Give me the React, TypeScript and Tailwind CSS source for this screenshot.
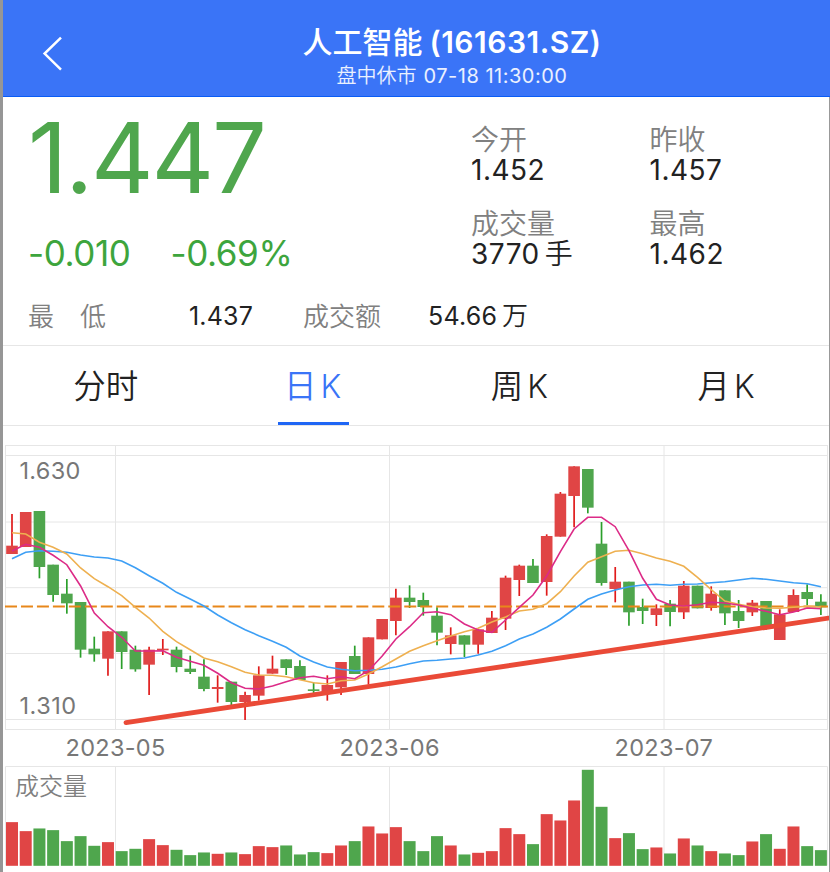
import { clsx } from "clsx";

type Candle = {
  up: boolean;
  high: number;
  top: number;
  bottom: number;
  low: number;
  vol: number;
};

// [direction, high, body top, body bottom, low, volume], in thirds of a pixel
const raw: [string, number, number, number, number, number][] = [
  ["r", 222, 317, 342, 342, 131],
  ["r", 216, 216, 321, 321, 104],
  ["g", 213, 213, 381, 415, 112],
  ["g", 374, 374, 465, 485, 107],
  ["g", 417, 461, 490, 521, 74],
  ["g", 486, 486, 629, 653, 89],
  ["g", 590, 626, 643, 665, 60],
  ["r", 574, 574, 656, 707, 71],
  ["g", 574, 574, 636, 687, 44],
  ["g", 617, 629, 688, 695, 51],
  ["r", 620, 629, 674, 765, 80],
  ["r", 597, 626, 631, 645, 62],
  ["g", 620, 629, 681, 697, 48],
  ["g", 647, 686, 696, 702, 32],
  ["g", 658, 710, 747, 754, 40],
  ["r", 706, 741, 747, 788, 36],
  ["g", 725, 725, 786, 796, 40],
  ["r", 755, 765, 786, 840, 35],
  ["r", 679, 706, 767, 782, 59],
  ["r", 647, 686, 701, 701, 56],
  ["g", 658, 658, 684, 705, 61],
  ["g", 661, 678, 720, 720, 34],
  ["g", 727, 748, 753, 760, 41],
  ["r", 706, 735, 762, 782, 38],
  ["r", 666, 666, 742, 765, 61],
  ["g", 617, 648, 702, 702, 74],
  ["r", 592, 592, 702, 734, 118],
  ["r", 537, 537, 598, 598, 97],
  ["r", 446, 473, 543, 586, 116],
  ["g", 436, 473, 486, 504, 74],
  ["g", 458, 480, 501, 527, 44],
  ["g", 502, 527, 578, 616, 89],
  ["r", 562, 586, 612, 643, 61],
  ["g", 586, 586, 614, 651, 34],
  ["r", 568, 568, 614, 641, 39],
  ["r", 513, 533, 579, 579, 44],
  ["r", 407, 413, 536, 570, 113],
  ["r", 374, 377, 420, 468, 95],
  ["g", 357, 377, 429, 429, 65],
  ["r", 283, 288, 426, 467, 155],
  ["r", 156, 161, 290, 290, 136],
  ["r", 79, 79, 168, 262, 196],
  ["g", 87, 87, 203, 220, 288],
  ["g", 246, 311, 429, 437, 177],
  ["r", 381, 425, 447, 487, 83],
  ["g", 425, 425, 517, 557, 98],
  ["g", 476, 501, 513, 552, 50],
  ["r", 493, 505, 525, 558, 55],
  ["g", 480, 491, 516, 559, 37],
  ["r", 423, 437, 517, 537, 82],
  ["g", 437, 437, 505, 505, 61],
  ["r", 439, 461, 504, 512, 44],
  ["g", 451, 451, 520, 555, 37],
  ["g", 480, 513, 543, 564, 32],
  ["r", 480, 488, 517, 528, 73],
  ["g", 483, 483, 560, 569, 95],
  ["r", 508, 523, 600, 600, 51],
  ["r", 448, 465, 516, 516, 118],
  ["g", 433, 456, 477, 496, 59],
  ["g", 463, 485, 502, 525, 47],
];

const ma5 = [
  333, 313, 322, 346, 374, 438, 519, 560, 592, 633, 633, 632, 652, 664, 676, 700, 728, 745, 747, 738,
  725, 713, 709, 716, 710, 716, 692, 648, 597, 560, 518, 515, 524, 552, 570, 577, 540, 502, 465, 408,
  335, 267, 232, 232, 260, 332, 415, 478, 495, 498, 494, 487, 489, 495, 505, 514, 524, 516, 504, 506,
];
const ma10 = [
  278, 282, 307, 322, 342, 384, 416, 440, 467, 502, 534, 574, 605, 629, 654, 665, 680, 697, 705, 706,
  710, 719, 728, 732, 722, 720, 702, 680, 657, 634, 617, 602, 588, 575, 565, 546, 531, 513, 508, 491,
  455, 408, 367, 350, 334, 331, 341, 354, 364, 379, 412, 449, 483, 493, 500, 504, 505, 502, 499, 501,
];
const ma20 = [
  356, 337, 332, 334, 337, 345, 351, 354, 363, 383, 407, 430, 457, 477, 498, 525, 548, 569, 587, 604,
  622, 648, 666, 681, 688, 692, 691, 688, 681, 671, 663, 661, 657, 654, 645, 634, 617, 597, 582, 562,
  537, 507, 478, 462, 450, 440, 435, 433, 436, 433, 432, 428, 425, 420, 415, 418, 423, 428, 431, 440,
];

const RED = "#e04545";
const GREEN = "#4fa64d";
const RED_WICK = "#e01b1b";
const GREEN_WICK = "#2b9f2b";
const GRID = "#e6e6e6";

const cx = (i: number) => 9 + i * 13.71;
const py = (v: number) => v / 3 - 5;

const candles: Candle[] = raw.map(([dir, high, top, bottom, low, vol]) => ({
  up: dir === "r",
  high: py(high),
  top: py(top),
  bottom: py(bottom),
  low: py(low),
  vol: vol / 3,
}));

const toPoints = (values: number[]) => values.map((v, i) => `${cx(i).toFixed(1)},${py(v).toFixed(1)}`).join(" ");

function Header() {
  return (
    <header className="relative h-[97px] border-b border-[#0a5cf5] bg-[#3a74f7] pt-[23px] text-center text-white">
      <svg className="absolute left-[38px] top-[36px]" width="24" height="36" viewBox="0 0 24 36" fill="none">
        <path d="M20 1.7 3.6 17.6 20 33.6" stroke="white" strokeWidth="2.5" />
      </svg>
      <div className="ml-[71px]">
        <h1 className="whitespace-pre text-[30px] font-semibold leading-[38px]">
          <span className="font-medium">人工智能</span>
          <span className="ml-[7px] tracking-[0.5px]">(161631.SZ)</span>
        </h1>
        <p className="pt-px text-[20px] leading-[28px] text-white/90">
          <span className="font-[350]">盘中休市</span>
          <span className="ml-[7px] tracking-[0.5px]">07-18 11:30:00</span>
        </p>
      </div>
    </header>
  );
}

const stats = [
  { label: "今开", value: "1.452" },
  { label: "昨收", value: "1.457" },
  { label: "成交量", value: "3770", unit: "手" },
  { label: "最高", value: "1.462" },
];

function Quote() {
  return (
    <section className="h-[249px] border-b border-[#e6e6e6]">
      <div className="flex h-[186px]">
        <div className="w-[468px] pl-[25px] text-[#4fa64d]">
          <div className="mt-[13px] h-[95px] text-[97px] leading-[96px] tracking-[-2.2px]">1.447</div>
          <div className="mt-[26px] flex gap-[40px] text-[35px] leading-[44px] tracking-[-0.4px] text-[#3da53d]">
            <span>-0.010</span>
            <span>-0.69%</span>
          </div>
        </div>
        <div className="grid grid-cols-[178.5px_1fr] content-start gap-y-[24px] pt-[28px]">
          {stats.map((s) => (
            <div key={s.label}>
              <div className="h-[30px] text-[28px] font-[350] leading-[30px] text-[#808080]">{s.label}</div>
              <div className="flex h-[30px] items-center text-[28px] leading-[30px] tracking-[0.5px] text-[#222]">
                {s.value}
                {s.unit && <span className="ml-[5px] font-[350]">{s.unit}</span>}
              </div>
            </div>
          ))}
        </div>
      </div>
      <div className="flex h-[66px] items-center pl-[25px] text-[26px] leading-[30px] text-[#222]">
        <div className="flex w-[161px] gap-[26px] pt-px font-[350] text-[#808080]">
          <span>最</span>
          <span>低</span>
        </div>
        <div className="w-[114px] text-[25px] tracking-[0.2px]">1.437</div>
        <div className="w-[125px] pt-px font-[350] text-[#808080]">成交额</div>
        <div className="text-[25px] tracking-[0.2px]">
          54.66<span className="ml-[5px] text-[26px] font-[350]">万</span>
        </div>
      </div>
    </section>
  );
}

const tabs = [
  { cn: "分时", k: "" },
  { cn: "日", k: "K", active: true },
  { cn: "周", k: "K" },
  { cn: "月", k: "K" },
];

function Tabs() {
  return (
    <nav className="grid h-[80px] grid-cols-4 border-b border-[#e6e6e6]">
      {tabs.map((t) => (
        <button
          key={t.cn}
          className={clsx(
            "flex flex-col items-center text-[32.5px] font-[350]",
            t.active ? "text-[#3a74f7]" : "text-[#222]"
          )}
        >
          <span className="flex h-[76px] items-center gap-[4px] pr-px pt-[6px]">
            {t.cn}
            {t.k && <span className="text-[32px]">{t.k}</span>}
          </span>
          {t.active && <span className="h-[3px] w-[71px] bg-[#1f66f5]" />}
        </button>
      ))}
    </nav>
  );
}

function PriceChart() {
  return (
    <svg className="mt-[19px] block" width="827" height="286" viewBox="0 0 827 286" fill="none">
      <g stroke={GRID}>
        <rect x="2.5" y="0.5" width="822" height="284" />
        {[10.5, 77, 142.7, 208.5, 274.5].map((y) => (
          <path key={y} d={`M2.5 ${y}H824.5`} />
        ))}
        {[112.5, 386.5, 661].map((x) => (
          <path key={x} d={`M${x} 0.5V284.5`} />
        ))}
      </g>
      <text x="16.5" y="34" fontSize="23.5" letterSpacing="0.3" fill="#777">
        1.630
      </text>
      <text x="16.5" y="269" fontSize="23.5" letterSpacing="0.5" fill="#777">
        1.310
      </text>
      {candles.map((c, i) => (
        <g key={i}>
          <path d={`M${cx(i)} ${c.high}V${c.low}`} stroke={c.up ? RED_WICK : GREEN_WICK} strokeWidth="1.7" />
          <rect
            x={cx(i) - 5.8}
            y={c.top}
            width="11.6"
            height={c.bottom - c.top}
            fill={c.up ? RED : GREEN}
          />
        </g>
      ))}
      <path d="M2 161.5H825" stroke="#e8871a" strokeWidth="2" strokeDasharray="12 3.97" />
      <polyline points={toPoints(ma20)} stroke="#3d9ff5" strokeWidth="1.6" />
      <polyline points={toPoints(ma10)} stroke="#eeb050" strokeWidth="1.6" />
      <polyline points={toPoints(ma5)} stroke="#dc2b87" strokeWidth="1.6" />
      <path d="M123 277.6 828 172.7" stroke="#ea4a37" strokeWidth="4.8" strokeLinecap="round" />
    </svg>
  );
}

function VolumeChart() {
  return (
    <svg className="block" width="827" height="106" viewBox="0 0 827 106" fill="none">
      <g stroke={GRID}>
        <path d="M2.5 99.5V0.5H824.5V99.5" />
        {[112.5, 386.5, 661].map((x) => (
          <path key={x} d={`M${x} 0.5V99.5`} />
        ))}
      </g>
      <text x="12" y="28.5" fontSize="24" fontWeight="350" fill="#808080">
        成交量
      </text>
      {candles.map((c, i) => (
        <rect key={i} x={cx(i) - 6} y={99.8 - c.vol} width="12" height={c.vol} fill={c.up ? RED : GREEN} />
      ))}
    </svg>
  );
}

export default function App() {
  return (
    <div className="flex h-[872px] w-[830px] overflow-hidden bg-white font-['Inter','Noto_Sans_CJK_SC',sans-serif]">
      <div className="w-[3px] shrink-0 bg-[#969696]" />
      <main className="w-[827px] shrink-0">
        <Header />
        <Quote />
        <Tabs />
        <PriceChart />
        <div className="flex h-[35px] pl-[62.5px] text-[23.5px] leading-[34px] tracking-[0.3px] text-[#777]">
          <span className="w-[274px]">2023-05</span>
          <span className="w-[275px]">2023-06</span>
          <span>2023-07</span>
        </div>
        <VolumeChart />
      </main>
      <div className="-ml-px mt-[97px] w-px shrink-0 bg-[#999]" />
    </div>
  );
}
